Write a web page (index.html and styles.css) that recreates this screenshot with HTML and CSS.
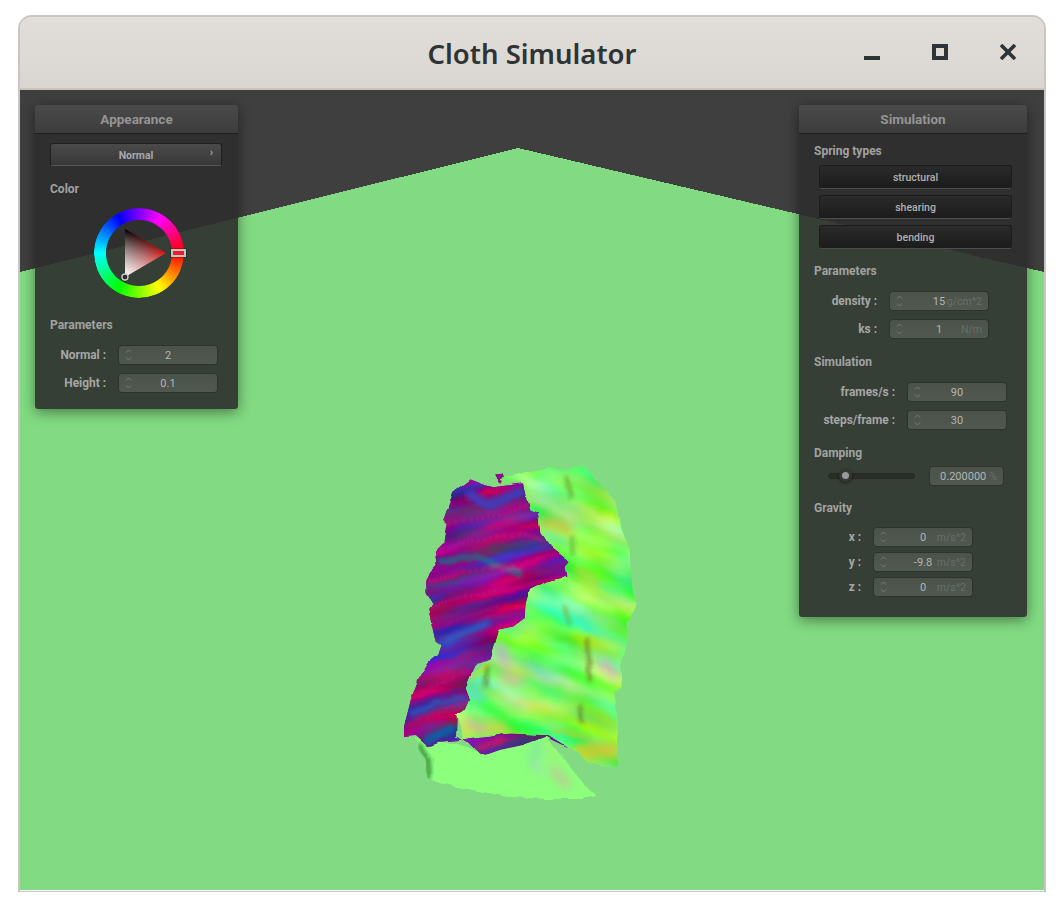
FILE: index.html
```html
<!DOCTYPE html>
<html lang="en">
<head>
<meta charset="utf-8">
<title>Cloth Simulator</title>
<link rel="stylesheet" href="styles.css">
</head>
<body>
<svg class="defs" width="0" height="0" aria-hidden="true">
  <symbol id="spin" viewBox="0 0 7 14">
    <path d="M1 4.5 3.5 2 6 4.5M1 9.5 3.5 12 6 9.5" fill="none" stroke="currentColor" stroke-width="1"/>
  </symbol>
  <filter id="b8" x="-40%" y="-40%" width="180%" height="180%"><feGaussianBlur stdDeviation="6"/></filter>
  <filter id="b14" x="-40%" y="-40%" width="180%" height="180%"><feGaussianBlur stdDeviation="14"/></filter>
  <filter id="rag" x="-10%" y="-10%" width="120%" height="120%" color-interpolation-filters="sRGB">
    <feTurbulence type="fractalNoise" baseFrequency="0.02" numOctaves="2" seed="5"/>
    <feDisplacementMap in="SourceGraphic" scale="14" xChannelSelector="R" yChannelSelector="G"/>
  </filter>
  <filter id="noise-purple" x="0" y="0" width="100%" height="100%" color-interpolation-filters="sRGB">
    <feTurbulence type="fractalNoise" baseFrequency="0.004 0.02" numOctaves="2" seed="11"/>
    <feColorMatrix values="1.25 0 0 0 -.16  -.5 .3 0 0 .18  -.4 0 .7 0 .38  0 0 0 0 1"/>
  </filter>
  <filter id="noise-green" x="0" y="0" width="100%" height="100%" color-interpolation-filters="sRGB">
    <feTurbulence type="fractalNoise" baseFrequency="0.005 0.014" numOctaves="2" seed="23"/>
    <feColorMatrix values="1 0 0 0 -.02  0 .25 0 0 .84  0 0 1.1 0 -.15  0 0 0 0 1"/>
  </filter>
  <clipPath id="clip-purple"><path d="M240 88 285 105 310 112 400 100 418 180 445 190 452 250 480 285 525 320 538 335 525 350 532 380 470 395 420 420 408 460 405 505 370 530 325 540 310 600 300 625 260 640 240 680 228 720 238 750 225 780 200 790 198 860 220 870 285 915 330 900 400 885 470 860 535 892 480 855 360 850 300 860 210 870 150 875 115 890 75 855 42 858 42 830 60 760 85 690 115 640 145 615 155 585 140 575 118 480 128 460 110 430 108 395 120 365 140 345 135 305 160 280 170 220 160 210 190 125Z"/></clipPath>
  <clipPath id="clip-green"><path d="M330 85 400 70 480 55 530 60 570 45 600 65 680 160 695 240 722 300 725 380 740 465 712 520 710 600 690 640 695 715 672 730 680 780 682 950 670 955 600 935 540 890 475 855 360 850 300 855 220 870 198 790 225 780 238 750 225 715 240 680 300 625 325 540 370 530 405 505 408 460 420 420 470 395 530 380 525 350 538 335 525 320 480 285 452 250 445 190 418 180 400 100 375 95 340 100Z"/></clipPath>
  <clipPath id="clip-sheet"><path d="M75 860 110 890 150 875 200 880 290 915 330 900 400 885 470 860 530 940 580 1000 618 1035 560 1048 480 1048 350 1040 200 1010 150 1000 115 985 105 930 85 900Z"/></clipPath>
</svg>

<div class="window">
  <header class="titlebar">
    <h1 class="title">Cloth Simulator</h1>
    <div class="controls">
      <svg class="ctl" viewBox="0 0 16 16"><rect x="0" y="12" width="16" height="4"/></svg>
      <svg class="ctl" viewBox="0 0 16 16"><path fill-rule="evenodd" d="M0 0H16V16H0ZM4 4V12H12V4Z"/></svg>
      <svg class="ctl" viewBox="0 0 16 16"><path d="M1 1 15 15M15 1 1 15" fill="none" stroke="#2e3436" stroke-width="3.6"/></svg>
    </div>
  </header>

  <main class="canvas">
    <svg class="scene" viewBox="0 0 1024 800">
      <polygon class="floor" points="0,182 498,58 1024,182 1024,800 0,800"/>
      <g transform="translate(370 360) scale(.33333)" filter="url(#rag)">
        <path fill="#8c0a8e" d="M312 70 340 68 345 80 330 102Z"/>
        <g clip-path="url(#clip-purple)">
          <rect x="0" y="40" width="560" height="900" fill="#86098f"/>
          <g transform="rotate(-14 300 500)"><rect x="-200" y="-100" width="1000" height="1200" filter="url(#noise-purple)"/></g>
          <g fill="none" stroke-linecap="round" filter="url(#b8)" opacity=".9">
            <path stroke="#3a3fc0" stroke-width="30" d="M240 135 300 165 390 130"/>
            <path stroke="#c0107a" stroke-width="10" d="M165 220 260 208 350 190 412 165"/>
            <path stroke="#c0107a" stroke-width="10" d="M140 300 250 272 400 250 470 282"/>
            <path stroke="#127a8a" stroke-width="14" d="M150 335 260 320 390 372"/>
            <path stroke="#c01078" stroke-width="10" d="M112 395 200 372 330 352 420 350"/>
            <path stroke="#c01078" stroke-width="10" d="M122 470 220 440 330 420"/>
            <path stroke="#a8107a" stroke-width="10" d="M160 525 260 490 325 470"/>
            <path stroke="#3058c0" stroke-width="24" d="M170 570 240 540 290 520"/>
            <path stroke="#b8106e" stroke-width="10" d="M80 730 150 700 240 660"/>
            <path stroke="#3058b8" stroke-width="14" d="M70 790 140 760 220 740"/>
            <path stroke="#c01060" stroke-width="9" d="M50 830 130 795 200 775"/>
            <path stroke="#1060a8" stroke-width="28" d="M110 870 180 840"/>
            <path stroke="#c01868" stroke-width="18" d="M270 890 340 870"/>
          </g>
        </g>
        <g clip-path="url(#clip-green)">
          <rect x="190" y="40" width="560" height="930" fill="#82fb5f"/>
          <g transform="rotate(22 460 500)"><rect x="0" y="-100" width="1000" height="1300" filter="url(#noise-green)"/></g>
          <g fill="none" stroke-linecap="round" filter="url(#b14)" opacity=".9">
            <path stroke="#e0b050" stroke-width="24" d="M465 210 540 235"/>
            <path stroke="#c8d850" stroke-width="26" d="M560 360 620 400"/>
            <path stroke="#c8a8d8" stroke-width="26" d="M330 590 350 640"/>
            <path stroke="#e8b8a0" stroke-width="28" d="M340 680 390 690"/>
            <path stroke="#d8a0c8" stroke-width="24" d="M640 640 670 670"/>
            <path stroke="#60d8e0" stroke-width="28" d="M240 720 270 745"/>
            <path stroke="#d0c830" stroke-width="46" d="M570 905 670 900"/>
            <path stroke="#e8e040" stroke-width="30" d="M215 835 240 855"/>
            <path stroke="#f09098" stroke-width="16" d="M240 815 280 840"/>
            <path stroke="#d8d048" stroke-width="26" d="M290 825 340 835"/>
          </g>
          <g fill="none" stroke-linecap="round" filter="url(#b8)" opacity=".9">
            <path stroke="#6a8a2c" stroke-width="9" d="M530 85 545 140"/>
            <path stroke="#5fa030" stroke-width="8" d="M545 260 548 310"/>
            <path stroke="#78a030" stroke-width="8" d="M520 470 540 520"/>
            <path stroke="#5c7a28" stroke-width="10" d="M292 640 288 710"/>
            <path stroke="#708030" stroke-width="11" d="M590 570 600 690"/>
            <path stroke="#5c7a28" stroke-width="10" d="M570 770 575 815"/>
            <path stroke="#b8d030" stroke-width="10" d="M490 840 590 860"/>
            <path stroke="#c8d040" stroke-width="12" d="M290 640 240 690"/>
          </g>
        </g>
        <g clip-path="url(#clip-sheet)">
          <rect x="60" y="850" width="570" height="210" fill="#8cff7c"/>
          <g fill="none" stroke-linecap="round" filter="url(#b8)">
            <path stroke="#1f6a2c" stroke-width="10" d="M85 885 115 930 118 980"/>
          </g>
          <g fill="none" stroke-linecap="round" filter="url(#b14)" opacity=".8">
            <path stroke="#78d8b0" stroke-width="18" d="M440 880 430 950"/>
            <path stroke="#b8d8d0" stroke-width="12" d="M440 930 450 970"/>
            <path stroke="#d8b0a0" stroke-width="22" d="M490 960 530 1000"/>
            <path stroke="#a8e878" stroke-width="16" d="M470 880 500 930"/>
          </g>
        </g>
      </g>
    </svg>

    <section class="panel panel-appearance">
      <h2 class="panel-title">Appearance</h2>
      <div class="panel-body">
        <button class="popup">Normal<span class="popup-arrow">›</span></button>
        <h3 class="group group-color">Color</h3>
        <div class="wheel">
          <div class="ring"></div>
          <svg class="tri" viewBox="0 0 90 90">
            <defs>
              <linearGradient id="tri-base" gradientUnits="userSpaceOnUse" x1="72" y1="45" x2="31" y2="45">
                <stop offset="0" stop-color="#e01010"/><stop offset="1" stop-color="#a05858"/>
              </linearGradient>
              <linearGradient id="tri-black" gradientUnits="userSpaceOnUse" x1="31" y1="20.5" x2="51.5" y2="57.5">
                <stop offset="0" stop-color="#000"/><stop offset="1" stop-color="#000" stop-opacity="0"/>
              </linearGradient>
              <linearGradient id="tri-white" gradientUnits="userSpaceOnUse" x1="31" y1="69" x2="51.5" y2="33">
                <stop offset="0" stop-color="#fff"/><stop offset="1" stop-color="#fff" stop-opacity="0"/>
              </linearGradient>
            </defs>
            <polygon points="31,20.5 72,45 31,69" fill="url(#tri-base)"/>
            <polygon points="31,20.5 72,45 31,69" fill="url(#tri-black)"/>
            <polygon points="31,20.5 72,45 31,69" fill="url(#tri-white)"/>
            <circle cx="31" cy="69" r="3" fill="#2a2a2a" stroke="#c8c8c8" stroke-width="1.4"/>
          </svg>
          <div class="hue-mark"></div>
        </div>
        <h3 class="group group-params">Parameters</h3>
        <div class="form form-normal">
          <label class="lbl">Normal :</label>
          <div class="field"><svg class="spin"><use href="#spin"/></svg><span class="val">2</span></div>
          <label class="lbl">Height :</label>
          <div class="field"><svg class="spin"><use href="#spin"/></svg><span class="val">0.1</span></div>
        </div>
      </div>
    </section>

    <section class="panel panel-simulation">
      <h2 class="panel-title">Simulation</h2>
      <div class="panel-body">
        <h3 class="group group-first">Spring types</h3>
        <div class="toggles">
          <button class="toggle">structural</button>
          <button class="toggle">shearing</button>
          <button class="toggle">bending</button>
        </div>
        <h3 class="group group-a">Parameters</h3>
        <div class="form form-params">
          <label class="lbl">density :</label>
          <div class="field"><svg class="spin"><use href="#spin"/></svg><span class="val">15</span><span class="unit">g/cm^2</span></div>
          <label class="lbl">ks :</label>
          <div class="field"><svg class="spin"><use href="#spin"/></svg><span class="val">1</span><span class="unit">N/m</span></div>
        </div>
        <h3 class="group group-b">Simulation</h3>
        <div class="form form-sim">
          <label class="lbl">frames/s :</label>
          <div class="field"><svg class="spin"><use href="#spin"/></svg><span class="val">90</span></div>
          <label class="lbl">steps/frame :</label>
          <div class="field"><svg class="spin"><use href="#spin"/></svg><span class="val">30</span></div>
        </div>
        <h3 class="group group-b">Damping</h3>
        <div class="slider-row">
          <div class="track"><span class="knob"></span></div>
          <div class="field field-plain"><span class="val">0.200000</span><span class="unit">%</span></div>
        </div>
        <h3 class="group group-c">Gravity</h3>
        <div class="form form-gravity">
          <label class="lbl">x :</label>
          <div class="field"><svg class="spin"><use href="#spin"/></svg><span class="val">0</span><span class="unit">m/s^2</span></div>
          <label class="lbl">y :</label>
          <div class="field"><svg class="spin"><use href="#spin"/></svg><span class="val">-9.8</span><span class="unit">m/s^2</span></div>
          <label class="lbl">z :</label>
          <div class="field"><svg class="spin"><use href="#spin"/></svg><span class="val">0</span><span class="unit">m/s^2</span></div>
        </div>
      </div>
    </section>
  </main>
</div>
</body>
</html>
```
FILE: styles.css
```css
* { box-sizing: border-box; }
html, body { margin: 0; height: 910px; overflow: hidden; background: #fff; }
body { font-family: Roboto, "Liberation Sans", sans-serif; padding: 15px 18px 0; }
.defs { position: absolute; }

.window {
  width: 1028px;
  height: 877px;
  border: 2px solid #c8c6c4;
  border-bottom-width: 1px;
  border-radius: 14px 14px 0 0;
  overflow: hidden;
  display: flex;
  flex-direction: column;
}

.titlebar {
  flex: none;
  height: 73px;
  background: linear-gradient(#e1ddd9, #dad6d1);
  border-bottom: 2px solid #c9c3bc;
  display: flex;
  align-items: center;
  justify-content: center;
  position: relative;
}
.title {
  margin: 1px 0 0;
  font: 600 27.5px "Noto Sans", sans-serif;
  color: #2e3436;
}
.controls {
  position: absolute;
  top: 27px;
  left: 844px;
  display: flex;
  gap: 52px;
}
.ctl { width: 16px; height: 16px; fill: #2e3436; display: block; }

.canvas {
  flex: none;
  height: 800px;
  position: relative;
  background: #3f3f3f;
}
.scene { position: absolute; inset: 0; width: 1024px; height: 800px; display: block; }
.floor { fill: #82db82; shape-rendering: crispEdges; }

.panel {
  position: absolute;
  top: 15px;
  background: rgba(45, 45, 45, .9);
  border-radius: 3px;
  box-shadow: 0 3px 14px rgba(0, 0, 0, .45);
  color: #a6a6a6;
}
.panel-appearance { left: 15px; width: 203px; height: 304px; }
.panel-simulation { left: 779px; width: 228px; height: 512px; }

.panel-title {
  margin: 0;
  height: 29px;
  line-height: 28px;
  text-align: center;
  font-size: 13.5px;
  font-weight: 700;
  color: #949494;
  background: linear-gradient(#4a4a4a, #3c3c3c);
  border-bottom: 1px solid #1f1f1f;
  border-radius: 3px 3px 0 0;
}
.panel-body { padding: 0 15px; }

.group {
  margin: 0;
  height: 16px;
  line-height: 16px;
  font-size: 12px;
  font-weight: 700;
  color: #a2a2a2;
}
.group-color { margin-top: 15px; }
.group-params { margin-top: 19px; }
.group-first { margin-top: 9px; }
.group-a { margin-top: 14px; }
.group-b { margin-top: 16px; }
.group-c { margin-top: 15px; }

.popup {
  display: block;
  position: relative;
  width: 172px;
  height: 23px;
  margin-top: 9px;
  padding: 2px 0 0;
  font: 700 10.5px Roboto, sans-serif;
  color: #a8a8a8;
  background: linear-gradient(#4a4a4a, #383838);
  border: 1px solid #1f1f1f;
  border-bottom-color: #555;
  border-radius: 3px;
}
.popup-arrow { position: absolute; right: 8px; top: 2px; font-size: 11px; }

.wheel {
  position: relative;
  width: 90px;
  height: 90px;
  margin: 11px 0 0 44px;
}
.ring {
  position: absolute;
  inset: 0;
  border-radius: 50%;
  background: conic-gradient(from 90deg, #f00, #ff0, #0f0, #0ff, #00f, #f0f, #f00);
  -webkit-mask: radial-gradient(circle, transparent 32.5px, #000 33.5px);
  mask: radial-gradient(circle, transparent 32.5px, #000 33.5px);
}
.tri { position: absolute; inset: 0; width: 90px; height: 90px; }
.hue-mark {
  position: absolute;
  left: 77px;
  top: 41px;
  width: 15px;
  height: 8px;
  background: #ee1c24;
  border: 2px solid #c4c4c4;
  outline: 1px solid rgba(0, 0, 0, .25);
}

.form {
  display: grid;
  column-gap: 13px;
  align-items: center;
}
.form-normal { grid-template-columns: 56px 98px; row-gap: 10px; margin-top: 13px; padding-bottom: 17px; }
.form-params { grid-template-columns: 63px 98px; row-gap: 10px; margin-top: 13px; }
.form-sim { grid-template-columns: 81px 98px; row-gap: 10px; margin-top: 13px; }
.form-gravity { grid-template-columns: 47px 98px; row-gap: 7px; margin-top: 12px; }

.lbl {
  text-align: right;
  white-space: nowrap;
  font-size: 11.9px;
  font-weight: 700;
  color: #a6a6a6;
  justify-self: end;
}

.field {
  height: 18px;
  display: grid;
  grid-template-columns: minmax(0, 1fr) auto minmax(0, 1fr);
  align-items: center;
  padding: 0 6px;
  background: linear-gradient(rgba(255, 255, 255, .1), rgba(255, 255, 255, .13));
  box-shadow: 0 0 0 1px rgba(0, 0, 0, .17);
  border-radius: 3px;
  font-size: 11px;
  color: #b4b4b4;
}
.spin { width: 7px; height: 14px; color: #7c7c7c; grid-column: 1; grid-row: 1; justify-self: start; }
.val { grid-column: 2; grid-row: 1; line-height: 16px; padding-top: 2px; }
.unit { grid-column: 3; grid-row: 1; justify-self: end; color: #6a6f69; line-height: 16px; padding-top: 1px; font-size: 10.5px; white-space: nowrap; }

.field-plain {
  display: flex;
  justify-content: flex-end;
  gap: 3px;
  padding-right: 6px;
  width: 73px;
}

.toggles { margin: 6px 0 0 5px; display: flex; flex-direction: column; gap: 6px; width: 193px; }
.toggle {
  height: 24px;
  padding: 0;
  font: 500 10.5px Roboto, sans-serif;
  color: #b0b0b0;
  background: linear-gradient(#2b2b2b, #1b1b1b);
  border: 1px solid #1c1c1c;
  border-bottom-color: #4e4e4e;
  border-radius: 3px;
}

.slider-row {
  display: flex;
  align-items: center;
  gap: 15px;
  margin: 6px 0 0 14px;
}
.track {
  position: relative;
  width: 87px;
  height: 6px;
  background: #2a2d29;
  border: 1px solid #262825;
  border-radius: 3px;
}
.knob {
  position: absolute;
  left: 10px;
  top: -5px;
  width: 13px;
  height: 13px;
  border-radius: 50%;
  background: radial-gradient(circle, #9a9a9a 0 3px, #3a3a3a 4px, #2a2a2a);
  box-shadow: 0 1px 3px rgba(0, 0, 0, .6);
}
```
